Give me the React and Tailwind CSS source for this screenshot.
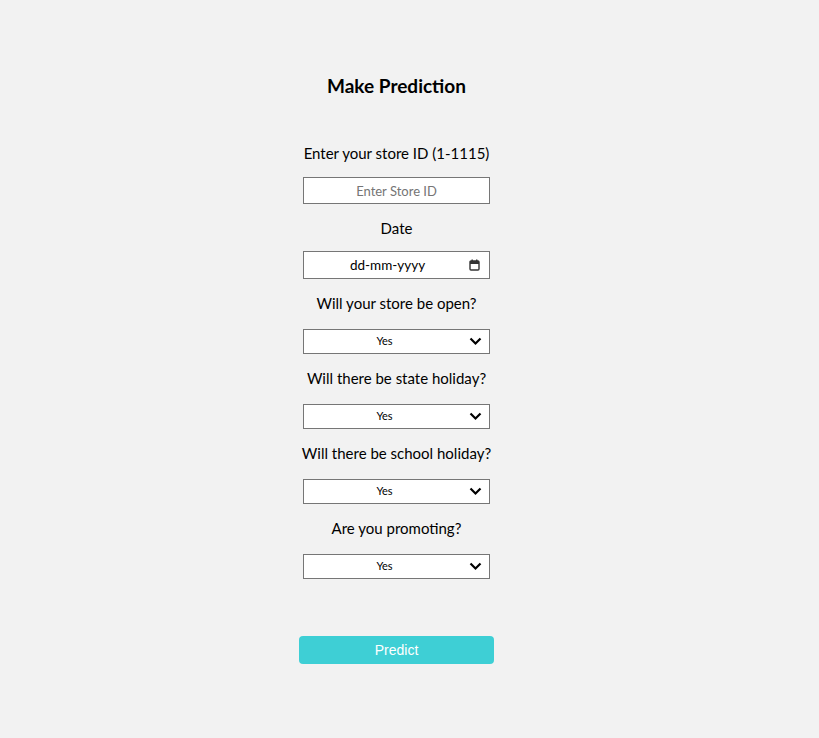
import React from 'react';

const questions = [
  'Will your store be open?',
  'Will there be state holiday?',
  'Will there be school holiday?',
  'Are you promoting?',
];

const Chevron = () => (
  <svg width="13" height="9" viewBox="0 0 13 9" className="pointer-events-none absolute right-[8px] top-[8px]">
    <path d="M1.5 1.5 L6.5 6.5 L11.5 1.5" fill="none" stroke="#000" strokeWidth="2.2" />
  </svg>
);

const App = () => {
  return (
    <div className="min-h-[738px] w-full bg-[#f2f2f2] text-black" style={{ fontFamily: 'Lato, "Noto Sans", sans-serif' }}>
      <div className="w-[793px] flex flex-col items-center pt-[74px]">
        <h1 className="text-[19px] leading-6 font-bold">Make Prediction</h1>

        <label className="mt-[43px] text-[15px] leading-6">Enter your store ID (1-1115)</label>
        <input
          type="text"
          placeholder="Enter Store ID"
          className="block mt-3 w-[187px] h-[27px] bg-white border border-[#767676] text-center text-[13px] placeholder:text-[#757575] outline-none"
        />

        <label className="mt-3 text-[15px] leading-6">Date</label>
        <div className="relative mt-[11px] w-[187px] h-[28px] bg-white border border-[#767676] flex items-center justify-center pr-[18px] text-[13.5px]">
          <span>dd-mm-yyyy</span>
          <svg width="11" height="12" viewBox="0 0 11 12" className="absolute right-[9px] top-[7px]">
            <rect x="1" y="2" width="9" height="9" rx="1" fill="none" stroke="#333" strokeWidth="1.4" />
            <rect x="1" y="2" width="9" height="3" fill="#333" />
            <rect x="2.5" y="0.5" width="1.4" height="2" fill="#333" />
            <rect x="7" y="0.5" width="1.4" height="2" fill="#333" />
          </svg>
        </div>

        {questions.map((q) => (
          <React.Fragment key={q}>
            <label className="mt-3 text-[15px] leading-6">{q}</label>
            <div className="relative mt-[14px] w-[187px] h-[25px]">
              <select className="block appearance-none w-full h-full bg-white border border-[#767676] text-center pr-[24px] text-[11px] outline-none">
                <option>Yes</option>
                <option>No</option>
              </select>
              <Chevron />
            </div>
          </React.Fragment>
        ))}

        <button
          className="mt-[57px] w-[195px] h-[28px] rounded-[4px] bg-[#3ecfd5] text-white text-[14px]"
          style={{ fontFamily: '"Liberation Sans", Arial, sans-serif' }}
        >
          Predict
        </button>
      </div>
    </div>
  );
};

export default App;
